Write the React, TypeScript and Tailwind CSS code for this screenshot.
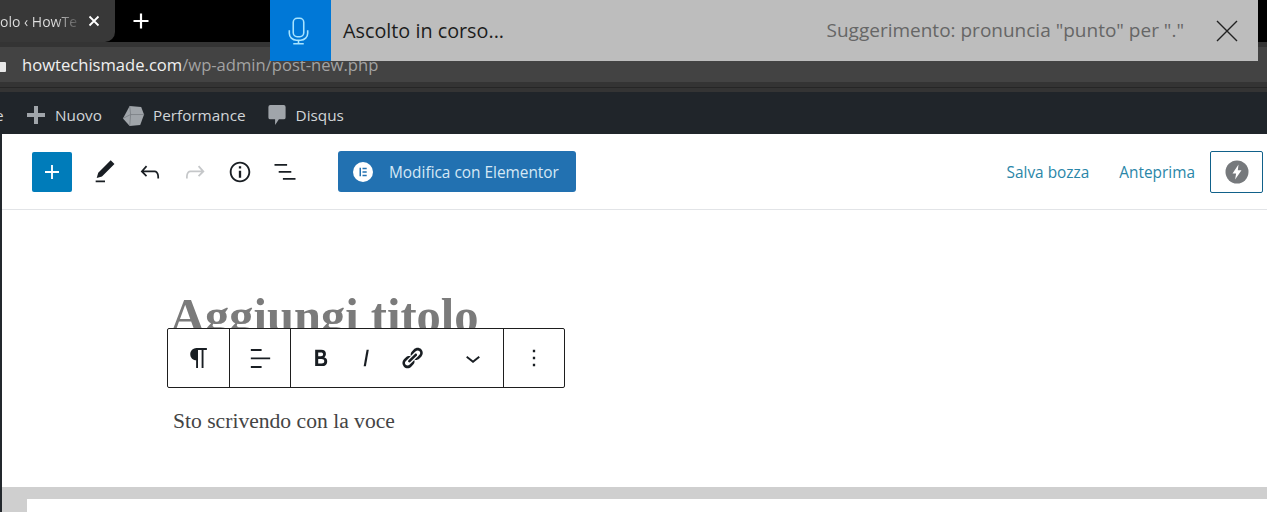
import React from 'react';

const sans = { fontFamily: '"Open Sans", "Noto Sans", sans-serif' };
const serif = { fontFamily: '"Liberation Serif", serif' };

function WpIcon({ d, className, box = '0 0 24 24' }: { d: string; className?: string; box?: string }) {
  return (
    <svg viewBox={box} className={className} fill="currentColor" aria-hidden="true">
      <path d={d} />
    </svg>
  );
}

const icons = {
  plus: 'M18 11.2h-5.2V6h-1.6v5.2H6v1.6h5.2V18h1.6v-5.2H18z',
  edit: 'M20.1 5.1L16.9 2 6.2 12.7l-1.3 4.4 4.5-1.3L20.1 5.1zM4 20.8h8v-1.5H4v1.5z',
  undo: 'M18.3 11.7c-.6-.6-1.4-.9-2.3-.9H6.7l2.9-3.3-1.1-1-4.5 5L8.5 16l1-1-2.7-2.7H16c.5 0 .9.2 1.3.5 1 1 1 3.4 1 4.5v.3h1.5v-.2c0-1.5 0-4.3-1.5-5.7z',
  redo: 'M15.6 6.5l-1.1 1 2.9 3.3H8c-.9 0-1.7.3-2.3.9-1.4 1.5-1.4 4.2-1.4 5.6v.2h1.5v-.3c0-1.1 0-3.5 1-4.5.3-.3.7-.5 1.3-.5h9.2L14.5 15l1.1 1.1 4.6-4.6-4.6-5z',
  info: 'M12 3.2c-4.8 0-8.8 3.9-8.8 8.8 0 4.8 3.9 8.8 8.8 8.8 4.8 0 8.8-3.9 8.8-8.8 0-4.8-4-8.8-8.8-8.8zm0 16c-4 0-7.2-3.3-7.2-7.2C4.8 8 8 4.8 12 4.8s7.2 3.3 7.2 7.2c0 4-3.2 7.2-7.2 7.2zM11 17h2v-6h-2v6zm0-8h2V7h-2v2z',
  list: 'M13.8 5.2H3v1.5h10.8V5.2zm-3.6 12v1.5H21v-1.5H10.2zm7.2-6H6.6v1.5h10.8v-1.5z',
  para: 'M18.3 4H9.9v-.1l-.9.2c-2.3.4-4 2.4-4 4.8s1.7 4.4 4 4.8l.7.1V20h1.5V5.5h2.9V20h1.5V5.5h2.7V4z',
  align: 'M4 19.8h8.9v-1.5H4v1.5zm8.9-15.6H4v1.5h8.9V4.2zm-8.9 7v1.5h16v-1.5H4z',
  bold: 'M14.7 11.3c1-.6 1.5-1.6 1.5-3 0-2.3-1.3-3.4-4-3.4H7v14h5.8c1.4 0 2.5-.3 3.3-1 .8-.7 1.2-1.7 1.2-2.9.1-1.9-.8-3.1-2.6-3.7zm-5.1-4h2.3c.6 0 1.1.1 1.4.4.3.3.5.7.5 1.2s-.2 1-.5 1.2c-.3.3-.8.4-1.4.4H9.6V7.3zm4.6 9c-.4.3-1 .4-1.7.4H9.6v-3.9h2.9c.7 0 1.3.2 1.7.5.4.3.6.8.6 1.5s-.2 1.2-.6 1.5z',
  italic: 'M12.5 5L10 19h1.9l2.5-14z',
  link: 'M17.74 2.76c1.68 1.69 1.68 4.41 0 6.1l-1.53 1.52c-1.12 1.12-2.7 1.47-4.14 1.09l2.62-2.61.76-.77.76-.76c.84-.84.84-2.2 0-3.04-.84-.85-2.2-.85-3.04 0l-.77.76-3.38 3.38c-.37-1.44-.02-3.02 1.1-4.14l1.52-1.53c1.69-1.68 4.42-1.68 6.1 0zM8.59 13.43l5.34-5.34c.42-.42.42-1.1 0-1.52-.44-.43-1.13-.39-1.53 0l-5.33 5.34c-.42.42-.42 1.1 0 1.52.44.43 1.13.39 1.52 0zm-.76 2.29l4.14-4.15c.38 1.44.03 3.02-1.09 4.14l-1.52 1.53c-1.69 1.68-4.41 1.68-6.1 0-1.68-1.68-1.68-4.42 0-6.1l1.53-1.52c1.12-1.12 2.7-1.47 4.14-1.1l-4.14 4.15c-.85.84-.85 2.2 0 3.05.84.84 2.2.84 3.04 0z',
  chevron: 'M17.5 11.6L12 16l-5.5-4.4.9-1.2L12 14l4.5-3.6 1 1.2z',
  more: 'M13 19h-2v-2h2v2zm0-6h-2v-2h2v2zm0-6h-2V5h2v2z',
};

function BrowserChrome() {
  return (
    <div style={sans}>
      <div className="flex h-[42px] bg-black">
        <div className="flex h-[42px] w-[115px] items-center overflow-hidden rounded-br-[10px] bg-[#383838]">
          <span className="w-[79px] overflow-hidden whitespace-nowrap bg-gradient-to-r from-[#e0e0e0] from-[70%] to-[#555555] to-[98%] bg-clip-text text-[14px] text-transparent">
            olo ‹ HowTe
          </span>
          <svg viewBox="0 0 12 12" className="ml-[9px] h-[12px] w-[12px] text-white" fill="none" stroke="currentColor" strokeWidth="1.8">
            <path d="M1.5 1.5l9 9M10.5 1.5l-9 9" />
          </svg>
        </div>
        <svg viewBox="0 0 16 16" className="ml-[18px] mt-[13px] h-[16px] w-[16px] text-white" fill="none" stroke="currentColor" strokeWidth="2.2">
          <path d="M8 0.5v15M0.5 8h15" />
        </svg>
      </div>
      <div className="h-[50px] bg-[#343434] pt-[5px]">
        <div className="flex h-[35px] items-center bg-[#434343]">
          <div className="ml-[-5px] mt-[4px] h-[10px] w-[11px] rounded-[1px] bg-[#e8e8e8]" />
          <span className="ml-[16px] mt-[2px] text-[16.6px] text-[#f0f0f0]">howtechismade.com</span>
          <span className="mt-[2px] text-[16.6px] text-[#a2a2a2]">/wp-admin/post-new.php</span>
        </div>
        <div className="mt-[5px] h-px bg-[#262626]" />
      </div>
      <div className="flex h-[42px] items-center bg-[#20252a] pt-[4px] text-[15.3px] text-[#d2d5d8]">
        <span className="ml-[-5px] w-[12px]">e</span>
        <svg viewBox="0 0 18 18" className="ml-[20px] h-[18px] w-[18px] text-[#a0a5aa]" fill="currentColor">
          <path d="M7 0h4v7h7v4h-7v7H7v-7H0V7h7z" />
        </svg>
        <span className="ml-[10px]">Nuovo</span>
        <svg viewBox="0 0 24 24" className="ml-[20px] h-[23px] w-[23px]">
          <path d="M8 2l12 1 3 8-4 11-11 1-7-8z" fill="#a0a5aa" />
          <path d="M8 2l1 9 14 0M9 11l-8 4M9 11l-1 12" fill="none" stroke="#777c81" strokeWidth="0.8" />
        </svg>
        <span className="ml-[8px]">Performance</span>
        <svg viewBox="0 0 18 22" className="ml-[22px] h-[21px] w-[18px] text-[#a0a5aa]" fill="currentColor">
          <path d="M2 0h14a2 2 0 012 2v11a2 2 0 01-2 2h-5l-4 6v-6H2a2 2 0 01-2-2V2a2 2 0 012-2z" />
        </svg>
        <span className="ml-[10px]">Disqus</span>
      </div>
    </div>
  );
}

function SpeechBar() {
  return (
    <div className="absolute left-[270px] top-0 flex h-[61px] w-[988px] items-center bg-[#bdbdbd]" style={sans}>
      <div className="flex h-[61px] w-[61px] items-center justify-center bg-[#0078d7] pr-[4px]">
        <svg viewBox="0 0 24 32" className="h-[28px] w-[21px] text-[#a8e4ff]" fill="none" stroke="currentColor" strokeWidth="1.8">
          <rect x="6" y="1.5" width="12" height="21" rx="4.5" />
          <path d="M1.5 15v3.5a8 8 0 008 8h5a8 8 0 008-8V15M12 26.5v3.5M6 30.5h12" />
        </svg>
      </div>
      <span className="ml-[12px] text-[19.8px] text-[#1c1c1c]">Ascolto in corso...</span>
      <span className="ml-auto text-[19px] text-[#666666]">Suggerimento: pronuncia "punto" per "."</span>
      <svg viewBox="0 0 22 22" className="ml-[32px] mr-[20px] h-[22px] w-[22px] text-[#222]" fill="none" stroke="currentColor" strokeWidth="1.4">
        <path d="M1 1l20 20M21 1L1 21" />
      </svg>
    </div>
  );
}

function EditorHeader() {
  return (
    <div className="flex h-[76px] items-center border-b border-[#e2e4e7] pl-[30px]" style={sans}>
      <div className="flex h-[40px] w-[40px] items-center justify-center rounded-[2px] bg-[#007cba] text-white">
        <WpIcon d={icons.plus} className="h-[28px] w-[28px]" />
      </div>
      <WpIcon d={icons.edit} className="ml-[19px] h-[28px] w-[28px] text-[#191e23]" />
      <WpIcon d={icons.undo} className="ml-[17px] h-[28px] w-[28px] text-[#191e23]" />
      <WpIcon d={icons.redo} className="ml-[17px] h-[28px] w-[28px] text-[#c5c7c9]" />
      <WpIcon d={icons.info} className="ml-[17px] h-[28px] w-[28px] text-[#191e23]" />
      <WpIcon d={icons.list} className="ml-[17px] h-[28px] w-[28px] text-[#191e23]" />
      <div className="ml-[39px] flex h-[41px] w-[238px] items-center rounded-[3px] bg-[#2271b1] text-[15.4px] font-medium text-[#d5e8f5]">
        <svg viewBox="0 0 20 20" className="ml-[15px] h-[20px] w-[20px]">
          <circle cx="10" cy="10" r="10" fill="#fff" />
          <path d="M6.5 5.8h1.5v8.4H6.5zM9.5 5.8h4.2v1.4H9.5zM9.5 9.3h4.2v1.4H9.5zM9.5 12.8h4.2v1.4H9.5z" fill="#2271b1" />
        </svg>
        <span className="ml-[16px] mt-[2px]">Modifica con Elementor</span>
      </div>
      <span className="ml-auto mt-[3px] text-[15.4px] text-[#2a86a8]">Salva bozza</span>
      <span className="ml-[30px] mt-[3px] text-[15.4px] text-[#2a86a8]">Anteprima</span>
      <div className="ml-[15px] mr-[4px] flex h-[42px] w-[53px] items-center justify-center rounded-[2px] border border-[#11618a]">
        <svg viewBox="0 0 24 24" className="h-[24px] w-[24px]">
          <circle cx="12" cy="12" r="11.5" fill="#76797c" />
          <path d="M13.5 4.5L7.5 13.5h3.6l-1 6 6.4-9.2h-3.7z" fill="#fff" />
        </svg>
      </div>
    </div>
  );
}

function BlockToolbar() {
  const btn = 'flex h-[58px] items-center justify-center text-[#191e23]';
  return (
    <div className="absolute left-[165px] top-[194px] flex h-[60px] w-[398px] rounded-[2px] border border-[#1e1e1e] bg-white">
      <div className={`${btn} w-[62px] border-r border-[#1e1e1e]`}>
        <WpIcon d={icons.para} className="h-[30px] w-[30px]" />
      </div>
      <div className={`${btn} w-[61px] border-r border-[#1e1e1e]`}>
        <WpIcon d={icons.align} className="h-[29px] w-[29px]" />
      </div>
      <div className={`${btn} w-[213px] justify-start border-r border-[#1e1e1e]`}>
        <WpIcon d={icons.bold} className="ml-[16px] h-[28px] w-[28px]" />
        <WpIcon d={icons.italic} className="ml-[17px] h-[28px] w-[28px]" />
        <WpIcon d={icons.link} box="0 0 20 20" className="ml-[20px] h-[24px] w-[24px]" />
        <WpIcon d={icons.chevron} className="ml-[34px] h-[30px] w-[30px]" />
      </div>
      <div className={`${btn} flex-1`}>
        <WpIcon d={icons.more} className="h-[28px] w-[28px]" />
      </div>
    </div>
  );
}

export default function App() {
  return (
    <div className="relative flex h-[512px] w-[1267px] flex-col overflow-hidden bg-white">
      <BrowserChrome />
      <SpeechBar />
      <div className="relative flex flex-1 flex-col border-l-2 border-[#23282d]">
        <EditorHeader />
        <div className="h-[277px] pl-[168px]">
          <div className="pt-[74px] text-[48.5px] font-bold leading-[64px] text-[#7b7b7b]" style={serif}>
            Aggiungi titolo
          </div>
          <div className="pl-[3px] pt-[61px] text-[21.6px] leading-[24px] text-[#444444]" style={serif}>
            Sto scrivendo con la voce
          </div>
        </div>
        <div className="flex-1 bg-[#cfcfcf] pl-[25px] pt-[12px]">
          <div className="h-full bg-white" />
        </div>
        <BlockToolbar />
      </div>
    </div>
  );
}
